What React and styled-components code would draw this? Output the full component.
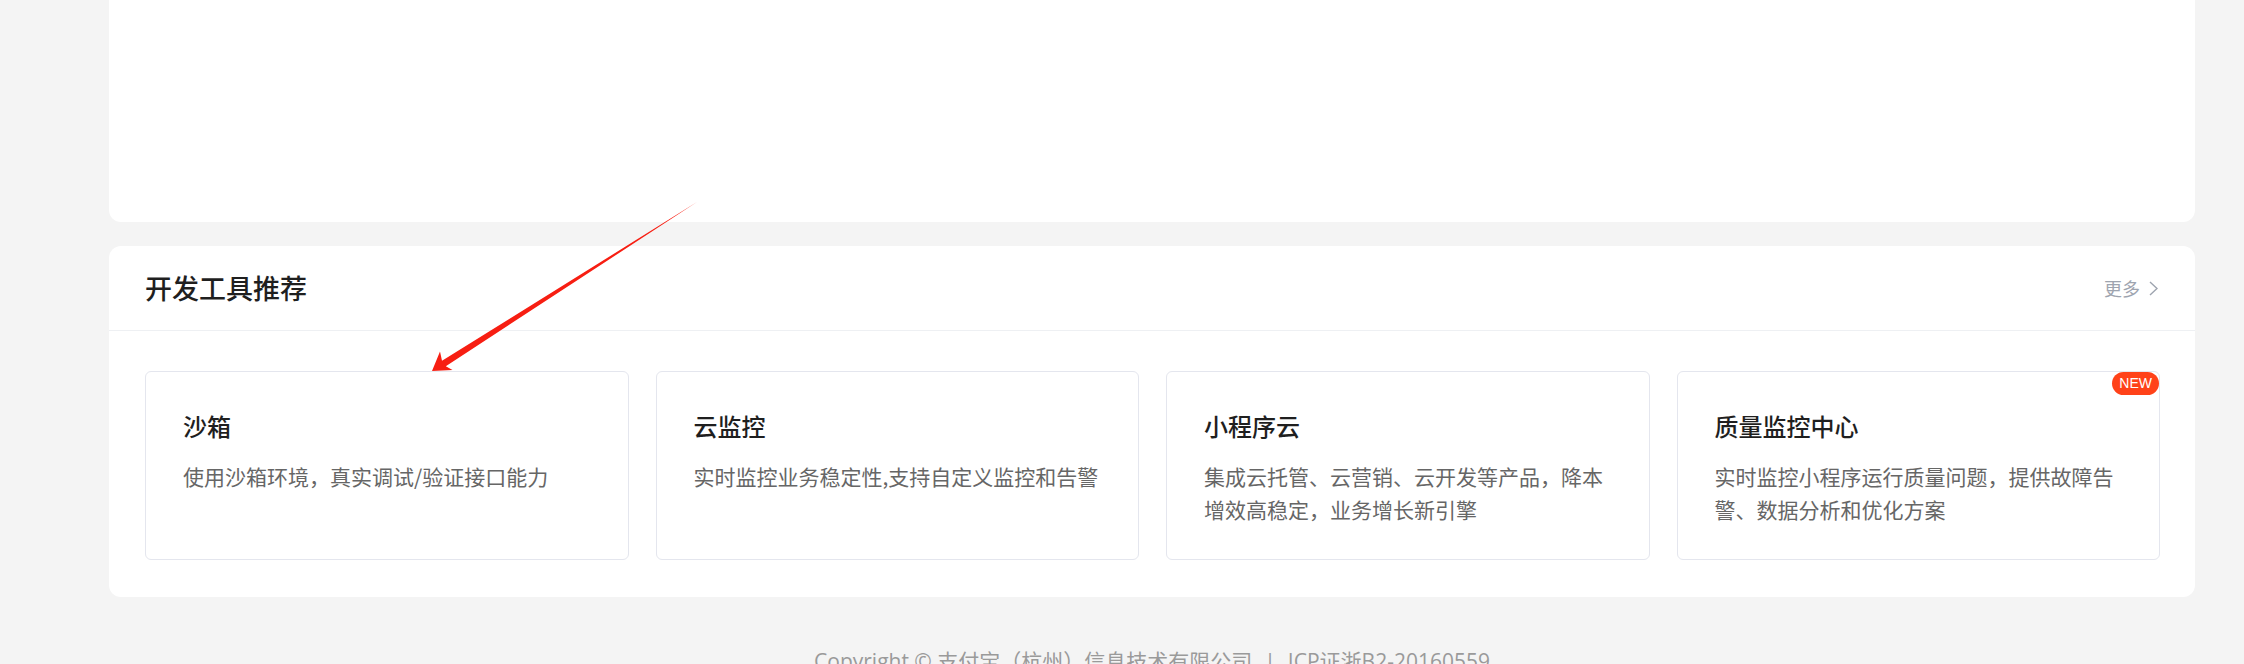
import React from "react";
import styled, { createGlobalStyle } from "styled-components";

const Global = createGlobalStyle`
  html, body { margin: 0; padding: 0; }
  body {
    background: #f4f4f4;
    font-family: "Noto Sans CJK SC", "Noto Sans", sans-serif;
    overflow: hidden;
  }
`;

const Page = styled.div`
  position: relative;
  width: 2244px;
  height: 664px;
  overflow: hidden;
  box-sizing: border-box;
  padding: 0 49px 0 109px;
  display: flex;
  flex-direction: column;
  gap: 24px;
`;

const TopPanel = styled.div`
  height: 222px;
  background: #fff;
  border-radius: 0 0 12px 12px;
  flex-shrink: 0;
`;

const Section = styled.section`
  background: #fff;
  border-radius: 12px;
  flex-shrink: 0;
`;

const SectionHeader = styled.div`
  height: 84px;
  padding: 0 37px 0 36px;
  display: flex;
  align-items: center;
  justify-content: space-between;
  border-bottom: 1px solid #eef0f3;
`;

const SectionTitle = styled.h2`
  margin: 0;
  font-size: 27px;
  line-height: 36px;
  font-weight: 500;
  color: #1f1f1f;
`;

const MoreLink = styled.a`
  display: flex;
  align-items: center;
  gap: 9px;
  font-size: 18px;
  line-height: 24px;
  color: #9ea4af;
  text-decoration: none;
  cursor: pointer;
`;

const Body = styled.div`
  padding: 40px 35px 37px 36px;
  display: grid;
  grid-template-columns: repeat(4, 1fr);
  gap: 27px;
`;

const ToolCard = styled.div`
  position: relative;
  border: 1px solid #e4e6ee;
  border-radius: 6px;
  padding: 36px 36px 31px 37px;
  min-height: 189px;
  box-sizing: border-box;
`;

const ToolTitle = styled.div`
  font-size: 24px;
  line-height: 36px;
  font-weight: 500;
  color: #1f1f1f;
  margin-bottom: 16px;
`;

const ToolDesc = styled.div`
  font-size: 21px;
  line-height: 33px;
  color: #666;
`;

const NewBadge = styled.span`
  position: absolute;
  top: 0;
  right: 0;
  height: 23px;
  padding: 0 7px;
  border-radius: 12px;
  background: #ff4219;
  color: #fff;
  font-family: "Liberation Sans", Arial, sans-serif;
  font-size: 14px;
  line-height: 23px;
`;

const Footer = styled.footer`
  padding-top: 24px;
  text-align: center;
  font-size: 21px;
  line-height: 33px;
  color: #9a9a9a;
  font-family: "Open Sans", "Noto Sans CJK SC", sans-serif;
`;

const Sep = styled.span`
  margin: 0 12px;
`;

const ArrowLayer = styled.svg`
  position: absolute;
  left: 0;
  top: 0;
  pointer-events: none;
`;

const tools = [
  { title: "沙箱", desc: "使用沙箱环境，真实调试/验证接口能力" },
  { title: "云监控", desc: "实时监控业务稳定性,支持自定义监控和告警" },
  { title: "小程序云", desc: "集成云托管、云营销、云开发等产品，降本增效高稳定，业务增长新引擎" },
  { title: "质量监控中心", desc: "实时监控小程序运行质量问题，提供故障告警、数据分析和优化方案", isNew: true },
];

export default function App() {
  return (
    <>
      <Global />
      <Page>
        <TopPanel />
        <Section>
          <SectionHeader>
            <SectionTitle>开发工具推荐</SectionTitle>
            <MoreLink>
              更多
              <svg width="9" height="15" viewBox="0 0 9 15">
                <polyline points="1,1 8,7.5 1,14" fill="none" stroke="#9ea4af" strokeWidth="1.4" />
              </svg>
            </MoreLink>
          </SectionHeader>
          <Body>
            {tools.map((t) => (
              <ToolCard key={t.title}>
                {t.isNew && <NewBadge>NEW</NewBadge>}
                <ToolTitle>{t.title}</ToolTitle>
                <ToolDesc>{t.desc}</ToolDesc>
              </ToolCard>
            ))}
          </Body>
        </Section>
        <Footer>
          Copyright © 支付宝（杭州）信息技术有限公司<Sep>|</Sep>ICP证浙B2-20160559
        </Footer>
        <ArrowLayer width="2244" height="664" viewBox="0 0 2244 664">
          <polygon
            points="432,371 440,351.5 442,360.8 697,202 445.8,366.3 452.5,370"
            fill="#f71e12"
          />
        </ArrowLayer>
      </Page>
    </>
  );
}
